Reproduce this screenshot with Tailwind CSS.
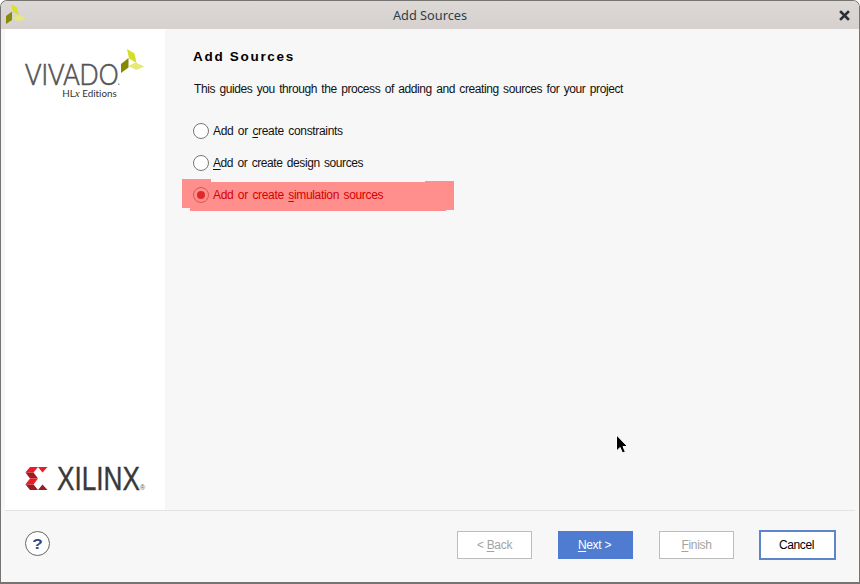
<!DOCTYPE html>
<html lang="en">
<head>
<meta charset="utf-8">
<title>Add Sources</title>
<script src="https://cdn.jsdelivr.net/npm/@tailwindcss/browser@4"></script>
</head>
<body class="w-[860px] h-[584px] overflow-hidden bg-white font-['Liberation_Sans',Arial,sans-serif] text-[12px] leading-[16px] text-[#111]">
<div class="relative flex h-[584px] w-[860px] flex-col overflow-hidden rounded-t-[7px] border border-b-2 border-[#777371] bg-[#f7f7f7]">
  <header class="grid h-7 shrink-0 grid-cols-[1fr_auto_1fr] items-center bg-linear-to-b from-[#dcd8d5] to-[#d6d1ce]">
    <svg class="ml-1 h-[22px] w-[22px]" viewBox="0 0 22 22"><path d="M6 0L12 3.5L14 11L8 8Z" fill="#d8df30"/><path d="M1 12L7 7.5V16L1 20Z" fill="#878b0a"/><path d="M7 14L14 11L21 14.500L13 17.500Z" fill="#e4e87e"/></svg>
    <h1 class="relative font-['Noto_Sans',sans-serif] text-[12.75px] text-[#2e3e48]">Add Sources</h1>
    <svg class="mr-[9px] h-[11px] w-[11px] justify-self-end" viewBox="0 0 11 11"><path d="M2 2L9 9M9 2L2 9" stroke="#2b3136" stroke-width="2.600" stroke-linecap="square"/></svg>
  </header>
  <main class="mx-1 flex h-[481px] shrink-0">
    <aside class="flex w-[160px] flex-col justify-between bg-white pt-[18px] pb-[15px] pl-5">
      <svg class="h-[54px] w-[124px] overflow-visible" viewBox="25 47 124 54">
        <text x="25" y="85" font-family="Lato, sans-serif" font-weight="300" font-size="29" textLength="93.500" lengthAdjust="spacingAndGlyphs" fill="#555" stroke="#555" stroke-width=".7">VIVADO</text>
        <circle cx="118.800" cy="84.300" r=".7" fill="#777"/>
        <path d="M127 49L134.500 53.500L136.500 63L129 58.500Z" fill="#d5de26"/>
        <path d="M121 64L128.500 58V67.500L121 73Z" fill="#858900"/>
        <path d="M128.500 66L135.500 62.500L144.500 66.500L136 70Z" fill="#e5e979"/>
        <text class="[font-variant-ligatures:none]" x="62.300" y="97" font-family="Lato, sans-serif" font-size="9.800" textLength="54.500" lengthAdjust="spacingAndGlyphs" fill="#333">HL<tspan font-family="Liberation Serif, serif" font-style="italic" font-size="11">x</tspan> Editions</text>
      </svg>
      <svg class="h-[30px] w-[124px] overflow-visible" viewBox="25 465 124 30">
        <path d="M30 467H38L33.500 472.500H25.300Z" fill="#ed1c24"/><path d="M25.500 472.500H33.500L38 478.500H30Z" fill="#9e1b22"/>
        <path d="M30 478.500H38L33.500 484.500H25.300Z" fill="#ed1c24"/><path d="M25.500 484.500H33.500L38 490H30Z" fill="#9e1b22"/>
        <path d="M38 467H47.500L42.500 472.500Z" fill="#ed1c24"/><path d="M42.500 484.500L47.500 490H38Z" fill="#9e1b22"/>
        <text x="57" y="490" font-family="Liberation Sans, sans-serif" font-size="33" textLength="83" lengthAdjust="spacingAndGlyphs" fill="#393939" stroke="#393939" stroke-width=".4">XILINX</text>
        <text x="140" y="490" font-family="Liberation Sans, sans-serif" font-size="7" fill="#555">®</text>
      </svg>
    </aside>
    <section class="relative flex-1">
      <h2 class="pt-5 pl-7 text-[13.5px] font-bold tracking-[1.7px] text-black">Add Sources</h2>
      <p class="mt-4 pl-[29px] tracking-[-0.42px] [word-spacing:1.5px] whitespace-nowrap">This guides you through the process of adding and creating sources for your project</p>
      <div class="mt-[26px] flex flex-col gap-4 pl-7 tracking-[-0.33px] [word-spacing:1.5px]">
        <label class="flex h-4 items-center gap-1"><span class="size-4 rounded-full border border-[#777] bg-white"></span><span>Add or <span class="underline underline-offset-2">c</span>reate constraints</span></label>
        <label class="flex h-4 items-center gap-1"><span class="size-4 rounded-full border border-[#777] bg-white"></span><span class="tracking-[-0.43px]"><span class="underline underline-offset-2">A</span>dd or create design sources</span></label>
        <label class="relative flex h-4 items-center gap-1 text-[#d60000]">
          <svg class="absolute -top-2 -left-[11px] h-8 w-[272px]" viewBox="0 0 272 32" shape-rendering="crispEdges"><path d="M0 0H29V3H243V2H272V31H264V32H8V29H0Z" fill="#ff8f8d"/></svg>
          <span class="relative flex size-4 items-center justify-center rounded-full border border-[#dc5554]"><span class="size-2 rounded-full bg-[#df2828]"></span></span>
          <span class="relative">Add or create <span class="underline underline-offset-2">s</span>imulation sources</span>
        </label>
      </div>
      <svg class="absolute top-[405px] left-[450px] h-[21px] w-[14px]" viewBox="0 0 14 21"><path d="M1.500 1V17L5 13.500L7.500 19L10.300 17.800L8 12.500H12.500Z" fill="#000" stroke="#fff" stroke-width="1"/></svg>
    </section>
  </main>
  <footer class="mx-1 flex flex-1 items-start border-t border-[#e3e3e3] pr-[19px] pl-5">
    <button class="mt-5 flex size-[25px] items-center justify-center rounded-full border border-[#666] bg-white text-[15px] font-bold text-[#294a87]"><span class="scale-x-115">?</span></button>
    <div class="mt-[19px] ml-auto flex items-center tracking-[-0.3px] [word-spacing:1.5px]">
      <button class="mr-[26px] h-7 w-[75px] border border-[#bdbdbd] bg-white text-[#a3a3a3]">&lt; <span class="underline underline-offset-2">B</span>ack</button>
      <button class="mr-[26px] h-7 w-[75px] bg-[#4f7cd1] pr-0.5 text-white"><span class="underline underline-offset-2">N</span>ext &gt;</button>
      <button class="mr-[25px] h-7 w-[75px] border border-[#bdbdbd] bg-white text-[#a3a3a3]"><span class="underline underline-offset-2">F</span>inish</button>
      <button class="h-[30px] w-[77px] border-2 border-[#5d85cb] bg-white pr-0.5 tracking-[-0.4px] text-black">Cancel</button>
    </div>
  </footer>
</div>
</body>
</html>
